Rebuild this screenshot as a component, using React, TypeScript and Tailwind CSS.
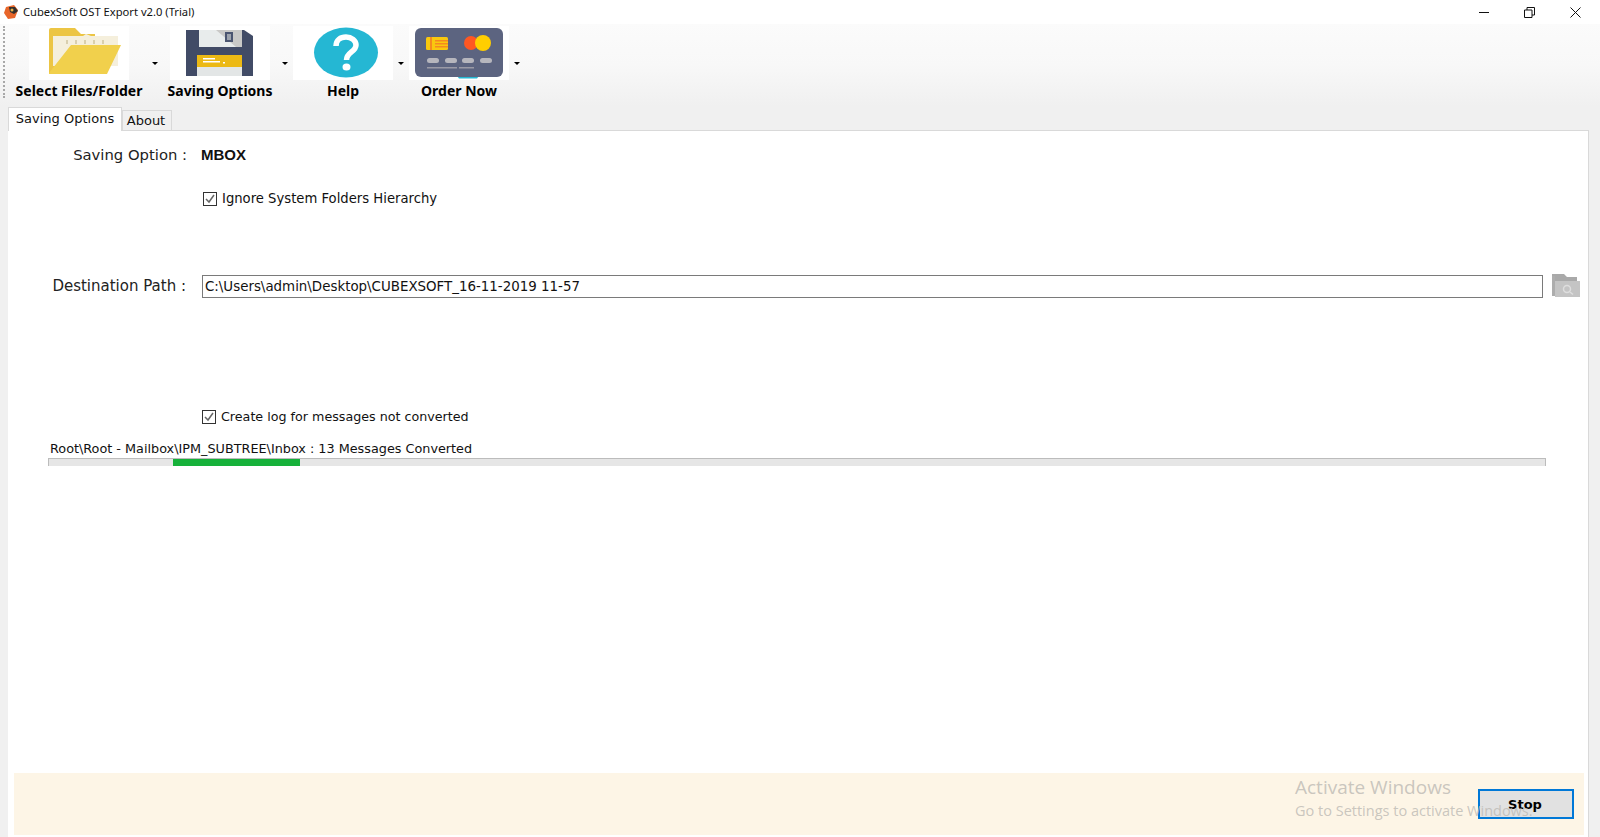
const uiFont = "[font-family:'DejaVu_Sans',sans-serif]";

function Folder() {
  return (
    <svg width="100" height="54" viewBox="0 0 100 54">
      <path d="M20 4a2 2 0 0 1 2-2h24l6 6h14v40H20z" fill="#ecc544" />
      <path d="M24 10h30l3-2 5 2h27v30H24z" fill="#f5efdc" />
      <g fill="#d9cfae">
        <rect x="37" y="14" width="2" height="4" />
        <rect x="46" y="14" width="2" height="4" />
        <rect x="55" y="14" width="2" height="4" />
        <rect x="64" y="14" width="2" height="4" />
        <rect x="73" y="14" width="2" height="4" />
      </g>
      <path d="M42 19h50l-14 29a1.500 1.500 0 0 1-1 0H20v-1z" fill="#f1d04c" />
    </svg>
  );
}

function Floppy() {
  return (
    <svg width="100" height="54" viewBox="0 0 100 54">
      <path d="M16 4h58l9 6v40H16z" fill="#414b66" />
      <rect x="29" y="4" width="43" height="17" fill="#e8ecec" />
      <path d="M46 4h26v17h-6z" fill="#c9c9c7" />
      <rect x="55" y="6" width="8" height="10" fill="#4a5570" />
      <rect x="57" y="8" width="4" height="6" fill="#9da3ad" />
      <rect x="27" y="29" width="45" height="12" fill="#ecb914" />
      <rect x="27" y="41" width="45" height="9" fill="#e3e6e6" />
      <rect x="33" y="32" width="12" height="1.500" fill="#fff" />
      <rect x="33" y="35" width="17" height="1.500" fill="#fff" />
      <rect x="53" y="36" width="2" height="1.500" fill="#fff" />
    </svg>
  );
}

function HelpIcon() {
  return (
    <svg width="100" height="54" viewBox="0 0 100 54">
      <ellipse cx="53" cy="26.500" rx="32" ry="25" fill="#25b7d3" />
      <path d="M43 20c0-6 4.500-9 10-9s10 3.500 10 8c0 7-9.500 7-9.500 15" fill="none" stroke="#fff" strokeWidth="5.500" />
      <ellipse cx="53.500" cy="41" rx="4" ry="3.500" fill="#fff" />
    </svg>
  );
}

function Card() {
  return (
    <svg width="100" height="54" viewBox="0 0 100 54">
      <path d="M48 50h22l-2 2.500h-18z" fill="#25b7d3" />
      <rect x="6" y="2" width="88" height="49" rx="6" fill="#5c6480" />
      <rect x="17" y="11" width="22" height="13" rx="1.500" fill="#f9c80e" />
      <rect x="21" y="11" width="2" height="13" fill="#f58a1f" />
      <rect x="26" y="14" width="13" height="1.500" fill="#f58a1f" />
      <rect x="26" y="17" width="13" height="1.500" fill="#f58a1f" />
      <rect x="26" y="20" width="13" height="1.500" fill="#f58a1f" />
      <circle cx="62" cy="17" r="7" fill="#ff5722" />
      <circle cx="74" cy="17" r="8" fill="#ffce00" />
      <g fill="#b6b6bd">
        <rect x="18" y="32" width="12" height="5" rx="2.500" />
        <rect x="36" y="32" width="12" height="5" rx="2.500" />
        <rect x="53" y="32" width="12" height="5" rx="2.500" />
        <rect x="71" y="32" width="12" height="5" rx="2.500" />
      </g>
      <rect x="18" y="41" width="30" height="1.500" fill="#9a9aa6" />
      <rect x="50" y="41" width="15" height="1.500" fill="#9a9aa6" />
    </svg>
  );
}

function ToolButton({ icon, label, gap, arrow }: { icon: React.ReactNode; label: string; gap: string; arrow: string }) {
  return (
    <div className={`flex items-start ${gap}`}>
      <div className="flex w-[100px] flex-col items-center">
        <div className="h-[54px] w-[100px] bg-white">{icon}</div>
        <div className="mt-[2px] h-[20px] whitespace-nowrap text-[14px] leading-[18px] font-bold text-black [font-family:'Noto_Sans',sans-serif]">
          {label}
        </div>
      </div>
      <div className={`mt-[36px] h-0 w-0 border-x-[3px] border-t-[3px] border-x-transparent border-t-black ${arrow}`} />
    </div>
  );
}

function Check({ label, textClass }: { label: string; textClass: string }) {
  return (
    <div className="flex items-center">
      <div className="flex h-[14px] w-[14px] items-center justify-center border border-[#333] bg-white">
        <svg width="12" height="12" viewBox="0 0 12 12">
          <path d="M2 6l3 3 5-7" fill="none" stroke="#666" strokeWidth="1.500" />
        </svg>
      </div>
      <span className={`ml-[5px] leading-[18px] text-[#111] ${textClass}`}>{label}</span>
    </div>
  );
}

export default function App() {
  return (
    <div className={`relative flex h-[837px] w-[1600px] flex-col overflow-hidden bg-[#f0f0f0] ${uiFont}`}>
      {/* title bar */}
      <div className="flex h-[24px] items-center bg-white pl-[3px]">
        <svg width="16" height="16" viewBox="0 0 16 16">
          <path d="M3 3l8-2 4 5-3 8-7 1-4-6z" fill="#e8662a" />
          <path d="M6 3l6 0 3 4-4 3-4-2z" fill="#33302e" />
          <circle cx="9" cy="6" r="1.500" fill="#e9b44c" />
        </svg>
        <span className="ml-[4px] text-[11.200px] leading-[16px] text-[#111] [font-family:'Noto_Sans',sans-serif]">
          CubexSoft OST Export v2.0 (Trial)
        </span>
        <div className="ml-auto flex items-center">
          <svg width="10" height="10" viewBox="0 0 10 10" className="mr-[35px]">
            <path d="M0 5.500h10" stroke="#111" strokeWidth="1" />
          </svg>
          <svg width="11" height="11" viewBox="0 0 11 11" className="mr-[35px]">
            <path d="M.5 3h7.500v7.500H.5z M3 3V.5h7.500V8H8" fill="none" stroke="#111" strokeWidth="1" />
          </svg>
          <svg width="11" height="11" viewBox="0 0 11 11" className="mr-[19px]">
            <path d="M.5.500l10 10M10.500.500l-10 10" stroke="#111" strokeWidth="1" />
          </svg>
        </div>
      </div>

      {/* toolbar */}
      <div className="flex h-[82px] items-start bg-gradient-to-b from-[#fbfbfb] via-[#f8f8f8] to-[#f0f0f0] pt-[2px]">
        <div className="ml-[3px] h-[72px] w-0 border-l-2 border-dotted border-[#a8a8a8]" />
        <div className="ml-[24px] flex">
          <ToolButton icon={<Folder />} label="Select Files/Folder" gap="w-[141px]" arrow="ml-[23px]" />
          <ToolButton icon={<Floppy />} label="Saving Options" gap="w-[123px]" arrow="ml-[12px]" />
          <ToolButton icon={<HelpIcon />} label="Help" gap="w-[116px]" arrow="ml-[5px]" />
          <ToolButton icon={<Card />} label="Order Now" gap="w-[116px]" arrow="ml-[5px]" />
        </div>
      </div>

      {/* tabs */}
      <div className="flex h-[24px] items-end pl-[8px]">
        <div className="z-10 -mb-px flex h-[24px] w-[114px] items-start justify-center border border-b-0 border-[#d9d9d9] bg-white pt-[2px] text-[13px] leading-[18px] text-[#111]">
          Saving Options
        </div>
        <div className="flex h-[20px] w-[50px] items-center justify-center border border-b-0 border-[#d9d9d9] bg-[#f0f0f0] pr-[2px] text-[13px] leading-[18px] text-[#111]">
          About
        </div>
      </div>

      {/* panel */}
      <div className="mr-[11px] ml-[8px] flex flex-1 flex-col border-t border-r border-[#d9d9d9] bg-white">
        <div className="mt-[13px] flex h-[22px] items-center">
          <div className="w-[179px] whitespace-pre text-right text-[14.800px] leading-[22px] text-[#222]">Saving Option :</div>
          <div className="ml-[14px] text-[15px] leading-[22px] font-bold text-[#111] [font-family:'Liberation_Sans',sans-serif]">MBOX</div>
        </div>
        <div className="mt-[24px] ml-[195px]">
          <Check label="Ignore System Folders Hierarchy" textClass="text-[13.200px]" />
        </div>
        <div className="mt-[65px] flex h-[26px] items-center">
          <div className="w-[178px] whitespace-pre text-right text-[15px] leading-[22px] text-[#222]">Destination Path :</div>
          <div className="ml-[16px] flex h-[23px] w-[1341px] items-center border border-[#7a7a7a] px-[2px] pt-[2px] text-[13.400px] text-[#111]">
            C:\Users\admin\Desktop\CUBEXSOFT_16-11-2019 11-57
          </div>
          <svg width="28" height="24" viewBox="0 0 28 24" className="ml-[9px]">
            <path d="M0 0h12l3 3h10v4H0z" fill="#a9a9a9" />
            <path d="M0 2h3v20H0z" fill="#adadad" />
            <path d="M3 7h25v16H3z" fill="#c4c4c4" />
            <circle cx="15" cy="15" r="3.500" fill="none" stroke="#dedede" strokeWidth="1.500" />
            <path d="M18 18l3 2.500" stroke="#dedede" strokeWidth="1.500" />
          </svg>
        </div>
        <div className="mt-[109px] ml-[194px]">
          <Check label="Create log for messages not converted" textClass="text-[12.700px]" />
        </div>
        <div className="mt-[14px] ml-[42px] h-[18px] text-[12.800px] leading-[18px] text-[#111]">
          Root\Root - Mailbox\IPM_SUBTREE\Inbox : 13 Messages Converted
        </div>
        <div className="ml-[40px] flex h-[8px] w-[1498px] border-x border-t border-[#bcbcbc] bg-[#e6e6e6]">
          <div className="ml-[124px] h-full w-[127px] bg-[#16b13a]" />
        </div>

        {/* bottom band */}
        <div className="mt-auto mr-[4px] mb-[2px] ml-[6px] flex h-[62px] items-center justify-end bg-[#fdf5e6] pr-[10px]">
          <button className="h-[30px] w-[96px] border-[2px] border-[#0078d7] bg-[#e1e1e1] pt-[1px] pr-[2px] text-[13px] font-bold text-black">
            Stop
          </button>
        </div>
      </div>

      {/* Windows activation watermark overlays the page */}
      <div className="pointer-events-none absolute top-[774px] left-[1295px] [font-family:'Open_Sans',sans-serif] text-[#bcb9b4]/80 whitespace-nowrap">
        <div className="text-[19px] leading-[27px]">Activate Windows</div>
        <div className="text-[14.500px] leading-[20px]">Go to Settings to activate Windows.</div>
      </div>
    </div>
  );
}
